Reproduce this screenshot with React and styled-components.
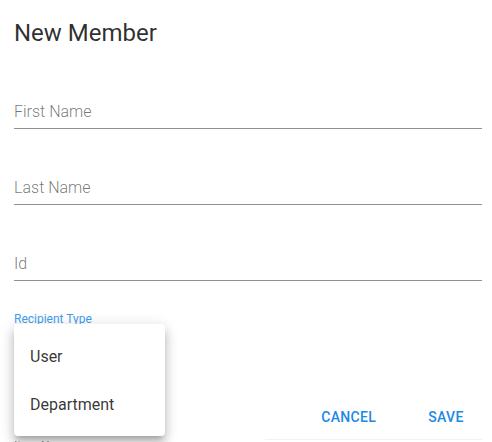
import React from "react";
import styled, { createGlobalStyle } from "styled-components";

const Global = createGlobalStyle`
  html, body { margin: 0; padding: 0; background: #fff; }
  body { font-family: Roboto, "Noto Sans", Arial, sans-serif; overflow: hidden; }
`;

const Dialog = styled.div`
  position: relative;
  width: 492px;
  height: 442px;
  box-sizing: border-box;
  padding: 17px 10px 0 14px;
  overflow: hidden;
  display: flex;
  flex-direction: column;
`;

const Title = styled.h2`
  margin: 0 0 4px 0;
  font-size: 24px;
  line-height: 32px;
  font-weight: 400;
  color: rgba(0, 0, 0, 0.82);
`;

const Field = styled.div`
  padding: 47px 0 4px 0;
  border-bottom: 1px solid rgba(0, 0, 0, 0.44);
`;

const Placeholder = styled.div`
  font-size: 16px;
  line-height: 24px;
  font-weight: 300;
  color: rgba(0, 0, 0, 0.55);
`;

const SmallLabel = styled.div`
  margin-top: 30px;
  font-size: 12px;
  line-height: 16px;
  color: #3f9ef0;
`;

const Actions = styled.div`
  margin-top: 72px;
  display: flex;
  justify-content: flex-end;
  gap: 30px;
  padding-right: 4px;
`;

const Button = styled.button`
  min-width: 64px;
  padding: 6px 8px;
  border: 0;
  background: transparent;
  font-family: Roboto, Arial, sans-serif;
  font-size: 14px;
  font-weight: 500;
  line-height: 24.5px;
  letter-spacing: 0.02em;
  text-transform: uppercase;
  color: #1e88e5;
  cursor: pointer;
`;

const Footer = styled.div`
  margin-top: 3px;
  display: flex;
  align-items: flex-start;
`;

const FooterText = styled.div`
  font-size: 12px;
  line-height: 12px;
  color: rgba(0, 0, 0, 0.5);
  margin-top: 1px;
  width: 251px;
`;

const FooterLine = styled.div`
  flex: 1;
  border-top: 1px solid #f2f2f2;
`;

const Menu = styled.ul`
  position: absolute;
  left: 14px;
  top: 324px;
  width: 151px;
  margin: 0;
  padding: 8px 0;
  list-style: none;
  background: #fff;
  border-radius: 4px;
  box-shadow: 0px 5px 5px -3px rgba(0, 0, 0, 0.2),
    0px 8px 10px 1px rgba(0, 0, 0, 0.14), 0px 3px 14px 2px rgba(0, 0, 0, 0.12);
`;

const MenuItem = styled.li`
  height: 48px;
  display: flex;
  align-items: center;
  padding: 0 16px;
  font-size: 16px;
  color: rgba(0, 0, 0, 0.8);
`;

export default function App() {
  return (
    <>
      <Global />
      <Dialog>
        <Title>New Member</Title>
        <Field>
          <Placeholder>First Name</Placeholder>
        </Field>
        <Field>
          <Placeholder>Last Name</Placeholder>
        </Field>
        <Field>
          <Placeholder>Id</Placeholder>
        </Field>
        <SmallLabel>Recipient Type</SmallLabel>
        <Actions>
          <Button>Cancel</Button>
          <Button>Save</Button>
        </Actions>
        <Footer>
          <FooterText>Item Name</FooterText>
          <FooterLine />
        </Footer>
        <Menu>
          <MenuItem>User</MenuItem>
          <MenuItem>Department</MenuItem>
        </Menu>
      </Dialog>
    </>
  );
}
